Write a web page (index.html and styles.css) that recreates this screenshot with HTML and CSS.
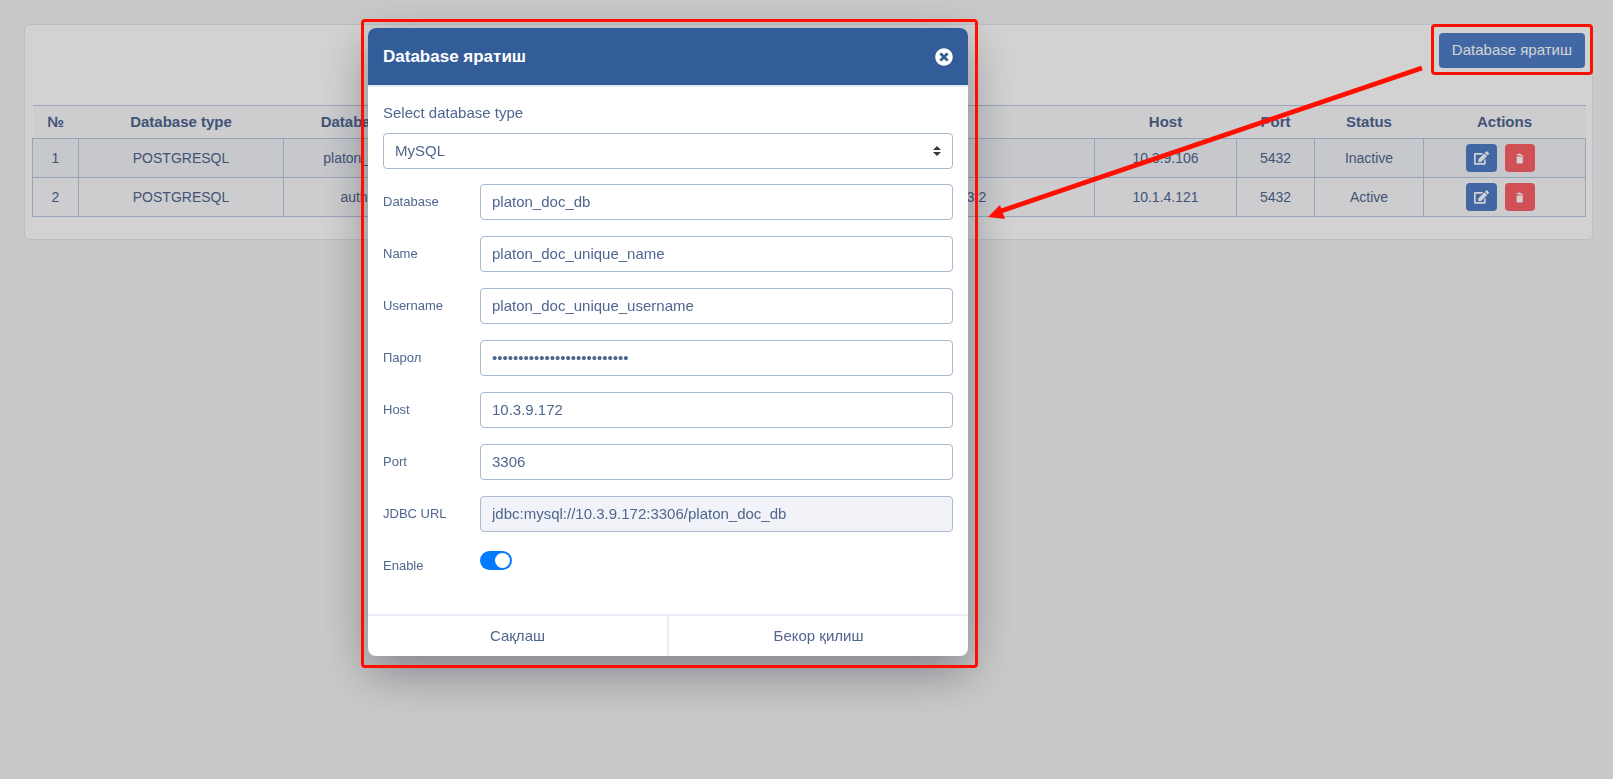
FILE: index.html
```html
<!DOCTYPE html>
<html lang="uz">
<head>
<meta charset="utf-8">
<title>Database яратиш</title>
<link rel="stylesheet" href="styles.css">
</head>
<body>
<svg class="sprite" aria-hidden="true">
	<symbol id="edit" viewBox="0 0 576 512"><path d="M402.6 83.2l90.2 90.2c3.8 3.8 3.8 10 0 13.8L274.400 405.600l-92.800 10.300c-12.400 1.400-22.900-9.100-21.500-21.500l10.300-92.800L388.800 83.200c3.800-3.800 10-3.800 13.800 0zm162-22.900l-48.800-48.800c-15.200-15.200-39.900-15.200-55.200 0l-35.400 35.400c-3.800 3.800-3.800 10 0 13.800l90.200 90.200c3.800 3.800 10 3.800 13.800 0l35.400-35.400c15.200-15.300 15.200-40 0-55.200zM384 346.200V448H64V128h229.800c3.200 0 6.200-1.300 8.500-3.500l40-40c7.600-7.600 2.200-20.500-8.500-20.500H48C21.500 64 0 85.500 0 112v352c0 26.500 21.500 48 48 48h352c26.500 0 48-21.500 48-48V306.200c0-10.700-12.900-16-20.500-8.500l-40 40c-2.200 2.300-3.500 5.300-3.500 8.500z"/></symbol>
	<symbol id="trash" viewBox="0 0 9 12"><path d="M0.500 1.200L2.800 0.800L3.200 0L5.400 0.700L5.600 1.500L8.600 2.800L8.300 3.600L0.500 2zM0.700 3.800H7.700V10.500Q7.700 11.500 6.700 11.500H1.700Q0.700 11.500 0.700 10.500z"/></symbol>
	<symbol id="close" viewBox="0 0 512 512"><path d="M256 8C119 8 8 119 8 256s111 248 248 248 248-111 248-248S393 8 256 8zm121.600 313.100c4.700 4.700 4.700 12.300 0 17L338 377.600c-4.700 4.700-12.300 4.700-17 0L256 312l-65.100 65.600c-4.700 4.700-12.300 4.700-17 0L134.400 338c-4.700-4.700-4.700-12.300 0-17l65.600-65-65.600-65.100c-4.700-4.700-4.700-12.300 0-17l39.600-39.600c4.700-4.700 12.300-4.700 17 0l65 65.700 65.100-65.600c4.700-4.700 12.300-4.700 17 0l39.600 39.600c4.700 4.700 4.700 12.300 0 17L312 256l65.600 65.100z"/></symbol>
</svg>

<div class="card">
	<div class="toolbar">
		<div class="marked">
			<button type="button" class="btn btn-create">Database яратиш</button>
		</div>
	</div>
	<table class="list">
		<colgroup>
			<col class="c-num"><col class="c-type"><col class="c-db"><col class="c-name"><col class="c-url"><col class="c-host"><col class="c-port"><col class="c-status"><col class="c-act">
		</colgroup>
		<thead>
			<tr><th>№</th><th>Database type</th><th>Database</th><th>Name</th><th>JDBC URL</th><th>Host</th><th>Port</th><th>Status</th><th>Actions</th></tr>
		</thead>
		<tbody>
			<tr>
				<td>1</td><td>POSTGRESQL</td><td>platon_db</td><td>platon</td><td>jdbc:postgresql://10.3.9.106</td><td>10.3.9.106</td><td>5432</td><td>Inactive</td>
				<td>
					<div class="actions">
						<button type="button" class="btn btn-icon" aria-label="Edit"><svg class="i-edit"><use href="#edit"/></svg></button>
						<button type="button" class="btn btn-icon btn-del" aria-label="Delete"><svg class="i-trash"><use href="#trash"/></svg></button>
					</div>
				</td>
			</tr>
			<tr>
				<td>2</td><td>POSTGRESQL</td><td>auth</td><td>auth</td><td>jdbc:postgresql://10.1.4.121:5432/s3t2</td><td>10.1.4.121</td><td>5432</td><td>Active</td>
				<td>
					<div class="actions">
						<button type="button" class="btn btn-icon" aria-label="Edit"><svg class="i-edit"><use href="#edit"/></svg></button>
						<button type="button" class="btn btn-icon btn-del" aria-label="Delete"><svg class="i-trash"><use href="#trash"/></svg></button>
					</div>
				</td>
			</tr>
		</tbody>
	</table>
</div>

<div class="backdrop"></div>

<div class="modal-wrap">
	<form class="modal" role="dialog" aria-labelledby="title">
		<div class="modal-header">
			<h2 id="title">Database яратиш</h2>
			<button type="button" class="close" aria-label="Close"><svg><use href="#close"/></svg></button>
		</div>
		<div class="modal-body">
			<label class="top-label" for="type">Select database type</label>
			<select id="type" class="field">
				<option>MySQL</option>
				<option>POSTGRESQL</option>
			</select>
			<div class="row"><label for="db">Database</label><input class="field" id="db" type="text" value="platon_doc_db"></div>
			<div class="row"><label for="name">Name</label><input class="field" id="name" type="text" value="platon_doc_unique_name"></div>
			<div class="row"><label for="user">Username</label><input class="field" id="user" type="text" value="platon_doc_unique_username"></div>
			<div class="row"><label for="pass">Парол</label><input class="field" id="pass" type="password" value="platon_doc_unique_password"></div>
			<div class="row"><label for="host">Host</label><input class="field" id="host" type="text" value="10.3.9.172"></div>
			<div class="row"><label for="port">Port</label><input class="field" id="port" type="text" value="3306"></div>
			<div class="row"><label for="url">JDBC URL</label><input class="field" id="url" type="text" value="jdbc:mysql://10.3.9.172:3306/platon_doc_db" readonly></div>
			<div class="row"><label for="enable">Enable</label><input class="switch" id="enable" type="checkbox" checked></div>
		</div>
		<div class="modal-footer">
			<button type="button">Сақлаш</button>
			<button type="button">Бекор қилиш</button>
		</div>
		<div class="modal-frame"></div>
	</form>
</div>

<svg class="arrow" viewBox="0 0 440 156" aria-hidden="true">
	<path d="M436 4L15 147" stroke="#ff0f00" stroke-width="5"/>
	<path d="M2 153L14 141L19 155z" fill="#ff0f00"/>
</svg>
</body>
</html>
```
FILE: styles.css
```css
*{box-sizing:border-box;}
body{margin:0;padding:24px 20px 24px 24px;background:#f4f4f4;color:#506690;font:14px/20px "Liberation Sans",Arial,sans-serif;}
button,input,select{font:inherit;color:inherit;}
.sprite{display:none;}
.card{padding:8px 6px 22px 7px;background:#fff;border:1px solid #e1e7f2;border-radius:5px;}
.toolbar{display:flex;justify-content:flex-end;margin-bottom:37px;padding-right:1px;}
.btn{display:flex;align-items:center;justify-content:center;border:0;border-radius:4px;background:#507fc8;color:#fff;cursor:pointer;}
.btn-create{height:35px;padding:0 13px 2px;font-size:15px;}
.marked{position:relative;}
.marked:after{content:"";position:absolute;z-index:3;top:-9px;left:-8px;right:-8px;bottom:-7px;border:3px solid #ff0f00;border-radius:4px;}

.list{width:100%;table-layout:fixed;border-collapse:collapse;text-align:center;}
.list th{height:33px;padding:0;background:#f9f9fc;border-top:1px solid #bcc8e0;font-size:15px;}
.list td{height:39px;padding:0;border:1px solid #bcc8e0;}
.list tbody tr:nth-child(odd){background:#f1f3f8;}
.list tbody tr:nth-child(even){background:#f9f9fc;}
.c-num{width:46px;}
.c-type{width:205px;}
.c-db{width:141px;}
.c-name{width:216px;}
.c-host{width:142px;}
.c-port{width:78px;}
.c-status{width:109px;}
.c-act{width:162px;}
.actions{display:flex;justify-content:center;gap:8px;padding-right:8px;}
.btn-icon{width:31px;height:28px;padding:0;}
.btn-del{width:30px;background:#fe6268;}
.btn svg{fill:currentColor;}
.i-edit{width:15px;height:14px;}
.i-trash{width:8px;height:11px;}

.backdrop{position:fixed;z-index:1;top:0;right:0;bottom:0;left:0;background:rgba(0,0,0,.176);}
.modal-wrap{position:fixed;z-index:2;top:28px;left:0;right:0;display:flex;justify-content:center;padding-right:277px;}
.modal{position:relative;width:600px;background:#fff;border-radius:8px;box-shadow:0 16px 48px rgba(18,22,38,.4);}
.modal-header{display:flex;align-items:center;justify-content:space-between;height:59px;padding:0 15px;background:#335d99;border-bottom:2px solid #e7ecf5;border-radius:8px 8px 0 0;color:#fff;}
.modal-header h2{margin:0;font-size:17px;font-weight:bold;}
.close{display:flex;padding:0;border:0;background:none;color:#fff;cursor:pointer;}
.close svg{width:18px;height:18px;fill:currentColor;}
.modal-body{padding:16px 15px 30px;}
.top-label{display:block;height:30px;line-height:20px;font-size:15px;}
.field{flex:1;min-width:0;width:100%;height:36px;padding:0 11px 2px;background:#fff;border:1px solid #a9b9ce;border-radius:4px;font-size:15px;outline:0;}
select.field{display:block;padding-bottom:0;appearance:none;background:#fff url("data:image/svg+xml,%3Csvg xmlns='http://www.w3.org/2000/svg' viewBox='0 0 4 5'%3E%3Cpath fill='%23343a40' d='M2 0L0 2h4zm0 5L0 3h4z'/%3E%3C/svg%3E") no-repeat right 11px center/8px 10px;}
.field:read-only:not(select){background:#f2f3f8;}
.row{display:flex;align-items:center;height:36px;margin-top:16px;font-size:13px;}
select + .row{margin-top:15px;}
.row label{width:97px;}
.switch{appearance:none;width:32px;height:19px;margin:0 0 11px;padding:2px;border-radius:10px;background:#007bff;}
.switch:before{content:"";display:block;width:15px;height:15px;margin-left:auto;border-radius:50%;background:#fff;}
.modal-footer{display:flex;border-top:2px solid #e7ecf5;}
.modal-footer button{flex:1;height:40px;padding:0;border:0;background:none;font-size:15px;cursor:pointer;}
.modal-footer button + button{border-left:2px solid #e7ecf5;}
.modal-frame{position:absolute;top:-9px;left:-7px;right:-10px;bottom:-12px;border:3px solid #ff0f00;border-radius:4px;pointer-events:none;}
.arrow{position:absolute;z-index:3;top:64px;right:187px;width:440px;height:156px;pointer-events:none;}
```
